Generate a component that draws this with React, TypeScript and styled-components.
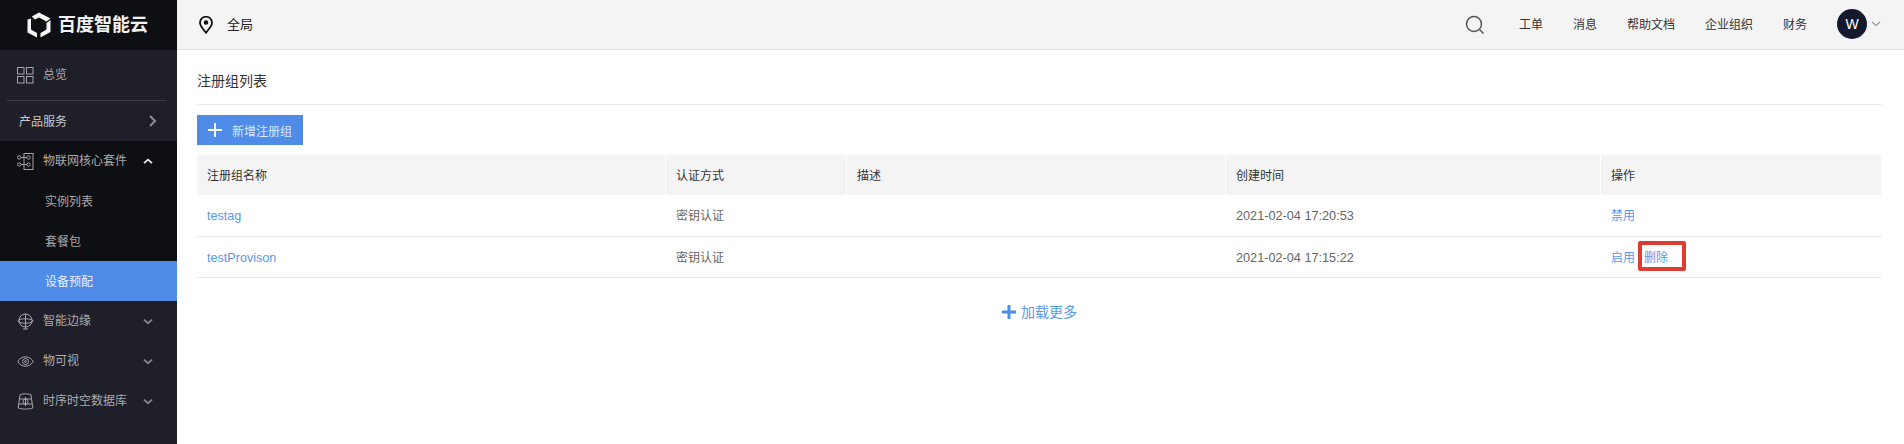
import { FC, Fragment, ReactNode } from "react";
import styled, { createGlobalStyle } from "styled-components";

const GlobalStyle = createGlobalStyle`
  html, body {
    margin: 0;
    padding: 0;
    background: #fff;
    font-family: "Liberation Sans", "Noto Sans CJK SC", sans-serif;
    font-size: 12px;
  }
  * { box-sizing: border-box; }
`;

const Page = styled.div`
  display: flex;
  width: 1904px;
  height: 444px;
  overflow: hidden;
`;

/* sidebar */
const Sidebar = styled.aside`
  width: 177px;
  flex: none;
  background: #1e1f28;
  display: flex;
  flex-direction: column;
`;

const LogoBar = styled.div`
  height: 50px;
  flex: none;
  background: #0e0f12;
  display: flex;
  align-items: center;
  padding-left: 27px;
  gap: 7px;
`;

const LogoText = styled.span`
  color: #f2f2f2;
  font-size: 18px;
  font-weight: 700;
  line-height: 1;
`;

const NavRow = styled.div<{ $dark?: boolean; $active?: boolean; $height?: number }>`
  height: ${({ $height }) => $height ?? 40}px;
  flex: none;
  display: flex;
  align-items: center;
  padding: 0 24px 0 17px;
  gap: 9px;
  color: ${({ $active }) => ($active ? "#e9f0fb" : "#a9a9ae")};
  background: ${({ $dark, $active }) =>
    $active ? "#4f8ce7" : $dark ? "#0e0f12" : "transparent"};
`;

const SubRow = styled(NavRow)`
  padding-left: 45px;
  padding-bottom: 2px;
`;

const ProductRow = styled(NavRow)`
  padding-right: 20px;
`;

const NavLabel = styled.span`
  flex: 1;
  line-height: 16px;
`;

const ProductLabel = styled(NavLabel)`
  color: #c9c9cc;
  margin-left: 2px;
  padding-top: 2px;
`;

const NavDivider = styled.div`
  height: 1px;
  flex: none;
  margin: 0 10px 0 7px;
  background: #3a3b46;
`;

const NavIcon = styled.svg`
  width: 17px;
  height: 17px;
  flex: none;
  fill: none;
  stroke: #a5a5aa;
  stroke-width: 1;
`;

const Chevron: FC<{ up?: boolean }> = ({ up }) => (
  <svg width="10" height="7" viewBox="0 0 10 7" fill="none" stroke={up ? "#e6e6e8" : "#85858b"} strokeWidth="1.8">
    <path d={up ? "M1 5.2 5 1.6l4 3.6" : "M1 1.6 5 5.2l4-3.6"} />
  </svg>
);

/* top bar */
const Main = styled.main`
  flex: 1;
  display: flex;
  flex-direction: column;
  min-width: 0;
`;

const TopBar = styled.header`
  height: 50px;
  flex: none;
  background: #f4f4f4;
  border-bottom: 1px solid #e8e8e8;
  display: flex;
  align-items: center;
  padding-left: 22px;
  color: #222;
`;

const Region = styled.span`
  font-size: 13px;
  margin-left: 14px;
  padding-bottom: 2px;
  flex: 1;
  color: #222;
`;

const TopLink = styled.span<{ $gap: number }>`
  margin-right: ${({ $gap }) => $gap}px;
  color: #333;
  line-height: 16px;
`;

const Avatar = styled.div`
  width: 30px;
  height: 30px;
  border-radius: 50%;
  background: #14192e;
  color: #fff;
  font-size: 14px;
  display: flex;
  align-items: center;
  justify-content: center;
  margin-right: 4px;
`;

const AvatarGroup = styled.div`
  display: flex;
  align-items: center;
  margin-right: 23px;
  margin-top: -2px;
`;

/* content */
const Content = styled.section`
  flex: 1;
  padding: 0 22px 0 20px;
`;

const Title = styled.h1`
  margin: 0;
  height: 55px;
  padding-top: 23px;
  font-size: 14px;
  font-weight: 400;
  line-height: 16px;
  color: #333;
  border-bottom: 1px solid #ebebeb;
`;

const AddButton = styled.button`
  display: flex;
  align-items: center;
  width: 106px;
  height: 30px;
  margin: 10px 0;
  padding: 0 0 0 11px;
  border: none;
  background: #4f8ce7;
  color: #dbe8fa;
  font: inherit;
  gap: 10px;
`;

const Table = styled.div`
  display: grid;
  grid-template-columns: 469px 181px 379px 375px 281px;
`;

const HeadCell = styled.div`
  height: 40px;
  display: flex;
  align-items: center;
  padding: 0 0 2px 10px;
  background: #f4f4f4;
  border-right: 1px solid #fff;
  color: #333;

  &:last-child {
    border-right: none;
  }
`;

const BodyCell = styled.div`
  height: 41.5px;
  display: flex;
  align-items: center;
  padding: 0 0 1px 10px;
  border-bottom: 1px solid #e9e9e9;
  color: #666;
`;

const TimeText = styled.span`
  font-size: 12.7px;
  padding-top: 3px;
`;

const Link = styled.a`
  color: #5a97ec;
  white-space: nowrap;
`;

const NameLink = styled(Link)`
  font-size: 12.6px;
  padding-top: 3px;
`;

const ActionLink = styled(Link)`
  position: relative;
  margin-left: 9px;
`;

const Highlight = styled.span`
  position: absolute;
  left: -6px;
  top: -7px;
  width: 48px;
  height: 30px;
  border: 4px solid #dc3d32;
  border-radius: 2px;
`;

const LoadMore = styled.div`
  display: flex;
  align-items: center;
  justify-content: center;
  gap: 5px;
  margin-top: 24px;
  font-size: 14px;
  line-height: 20px;
  color: #5a97ec;
`;

const Plus: FC<{ size: number; color: string; width: number }> = ({ size, color, width }) => (
  <svg width={size} height={size} viewBox={`0 0 ${size} ${size}`} style={{ flex: "none" }}>
    <path d={`M${size / 2} 0V${size}M0 ${size / 2}H${size}`} stroke={color} strokeWidth={width} fill="none" />
  </svg>
);

const Logo = () => (
  <svg width="24" height="26" viewBox="0 0 24 26" style={{ flex: "none" }}>
    <path d="M12 0.5 23.5 6.5 19.5 9.5 12 5.5 8 7.500 4.800 4.400Z" fill="#f5f5f5" />
    <path d="M0.500 7.500 4 6.500V17.500L10 21V25.500L0.500 20.500Z" fill="#f5f5f5" />
    <path d="M23.500 8V20L13.500 25.500V21L19.500 17.500V11Z" fill="#f5f5f5" />
  </svg>
);

const GridIcon = () => (
  <NavIcon viewBox="0 0 17 17">
    <rect x="0.5" y="0.5" width="6.5" height="6.5" />
    <rect x="9.5" y="0.5" width="6.5" height="6.5" />
    <rect x="0.5" y="9.5" width="6.5" height="6.5" />
    <rect x="9.5" y="9.5" width="6.5" height="6.5" />
  </NavIcon>
);

const CoreIcon = () => (
  <NavIcon viewBox="0 0 17 17">
    <rect x="7" y="0.5" width="9" height="16" />
    <circle cx="2.2" cy="4.5" r="1.7" />
    <circle cx="2.2" cy="11.5" r="1.7" />
    <circle cx="11.5" cy="4.5" r="1.7" />
    <circle cx="11.5" cy="11.5" r="1.7" />
    <path d="M4 4.5h5.8M4 11.5h5.8" />
  </NavIcon>
);

const EdgeIcon = () => (
  <NavIcon viewBox="0 0 17 17">
    <circle cx="8.5" cy="7.5" r="6.500" />
    <ellipse cx="8.5" cy="8" rx="7.500" ry="2.200" />
    <path d="M8.500 1V16M6 16h5" />
  </NavIcon>
);

const EyeIcon = () => (
  <NavIcon viewBox="0 0 17 17">
    <path d="M0.8 8.5C3 5 5.5 3.8 8.5 3.8s5.500 1.200 7.700 4.700c-2.200 3.500-4.700 4.700-7.700 4.700S3 12 0.800 8.500Z" />
    <circle cx="8.500" cy="8.500" r="3" />
    <circle cx="8.500" cy="8.500" r="0.900" />
  </NavIcon>
);

const DbIcon = () => (
  <NavIcon viewBox="0 0 17 17">
    <path d="M3 1.800C5 0.500 12 0.500 14 1.800L15.800 15C13 16.400 4 16.400 1.200 15Z" />
    <path d="M2.500 6h12M2 11h13M8.500 4v9" />
    <circle cx="8.500" cy="8.500" r="2.500" />
  </NavIcon>
);

interface IRow {
  name: string;
  time: string;
  actions: ReactNode;
}

const rows: IRow[] = [
  { name: "testag", time: "2021-02-04 17:20:53", actions: <Link>禁用</Link> },
  {
    name: "testProvison",
    time: "2021-02-04 17:15:22",
    actions: (
      <>
        <Link>启用</Link>
        <ActionLink>
          删除
          <Highlight />
        </ActionLink>
      </>
    ),
  },
];

const headers = ["注册组名称", "认证方式", "描述", "创建时间", "操作"];

export default function App() {
  return (
    <Page>
      <GlobalStyle />
      <Sidebar>
        <LogoBar>
          <Logo />
          <LogoText>百度智能云</LogoText>
        </LogoBar>
        <NavRow $height={50}>
          <GridIcon />
          <NavLabel>总览</NavLabel>
        </NavRow>
        <NavDivider />
        <ProductRow>
          <ProductLabel>产品服务</ProductLabel>
          <svg width="8" height="12" viewBox="0 0 8 12" fill="none" stroke="#8d8d93" strokeWidth="2">
            <path d="M1 1l5 5-5 5" />
          </svg>
        </ProductRow>
        <NavRow $dark>
          <CoreIcon />
          <NavLabel>物联网核心套件</NavLabel>
          <Chevron up />
        </NavRow>
        <SubRow $dark>实例列表</SubRow>
        <SubRow $dark>套餐包</SubRow>
        <SubRow $active>设备预配</SubRow>
        <NavRow>
          <EdgeIcon />
          <NavLabel>智能边缘</NavLabel>
          <Chevron />
        </NavRow>
        <NavRow>
          <EyeIcon />
          <NavLabel>物可视</NavLabel>
          <Chevron />
        </NavRow>
        <NavRow>
          <DbIcon />
          <NavLabel>时序时空数据库</NavLabel>
          <Chevron />
        </NavRow>
      </Sidebar>
      <Main>
        <TopBar>
          <svg width="14" height="18" viewBox="0 0 14 18" fill="none" stroke="#111" strokeWidth="1.8">
            <path d="M7 16.800C4 12.800 1 10 1 6.700a6 6 0 0 1 12 0C13 10 10 12.800 7 16.800Z" />
            <circle cx="7" cy="6.500" r="1.400" fill="#111" />
          </svg>
          <Region>全局</Region>
          <svg width="20" height="20" viewBox="0 0 20 20" fill="none" stroke="#555" strokeWidth="1.500" style={{ marginRight: 34 }}>
            <circle cx="9" cy="9" r="7.500" />
            <path d="M14.500 14.500 18.500 18.500" />
          </svg>
          <TopLink $gap={30}>工单</TopLink>
          <TopLink $gap={30}>消息</TopLink>
          <TopLink $gap={30}>帮助文档</TopLink>
          <TopLink $gap={30}>企业组织</TopLink>
          <TopLink $gap={30}>财务</TopLink>
          <AvatarGroup>
            <Avatar>W</Avatar>
            <svg width="10" height="6" viewBox="0 0 10 6" fill="none" stroke="#999" strokeWidth="1.100">
              <path d="M1 1l4 3.500L9 1" />
            </svg>
          </AvatarGroup>
        </TopBar>
        <Content>
          <Title>注册组列表</Title>
          <AddButton>
            <Plus size={14} color="#fff" width={2} />
            新增注册组
          </AddButton>
          <Table>
            {headers.map((h) => (
              <HeadCell key={h}>{h}</HeadCell>
            ))}
            {rows.map((r) => (
              <Fragment key={r.name}>
                <BodyCell>
                  <NameLink>{r.name}</NameLink>
                </BodyCell>
                <BodyCell>密钥认证</BodyCell>
                <BodyCell />
                <BodyCell>
                  <TimeText>{r.time}</TimeText>
                </BodyCell>
                <BodyCell>{r.actions}</BodyCell>
              </Fragment>
            ))}
          </Table>
          <LoadMore>
            <Plus size={14} color="#4f8ce7" width={3} />
            加载更多
          </LoadMore>
        </Content>
      </Main>
    </Page>
  );
}
